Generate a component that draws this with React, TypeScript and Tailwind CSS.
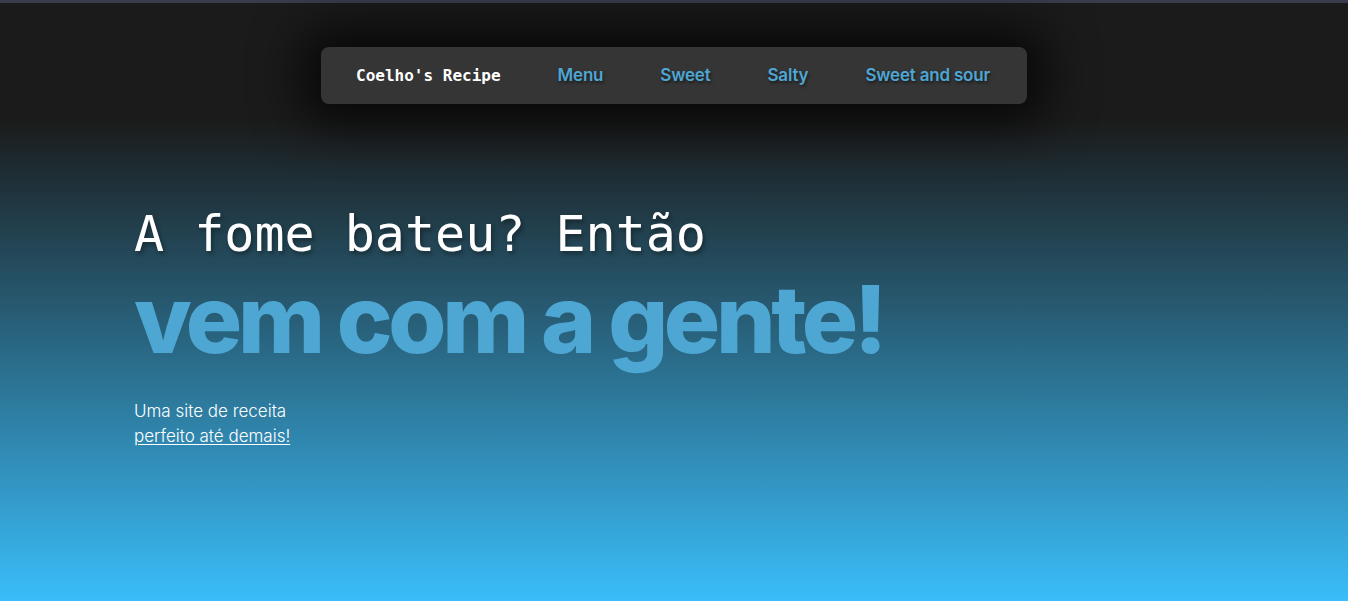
const links = ["Menu", "Sweet", "Salty", "Sweet and sour"];

export default function App() {
  return (
    <div className="w-full h-svh flex flex-col bg-linear-to-b/srgb from-[#1b1b1b] from-20% to-[#3abdf9] overflow-hidden">
      <div className="h-[3px] w-full bg-[#383c4c]" />

      <header className="flex justify-center pt-[44px]">
        <nav className="flex items-center h-[57px] pt-px pl-[35px] pr-[37px] gap-[57px] rounded-lg bg-[#353535] shadow-[0_0_50px_18px_rgba(0,0,0,0.75)]">
          <span className="font-['DejaVu_Sans_Mono',monospace] font-bold text-[16px] text-white">
            Coelho's Recipe
          </span>
          {links.map((item) => (
            <a
              key={item}
              href="#"
              className="font-['Inter',sans-serif] font-semibold text-[17px] tracking-[-0.2px] text-[#4ea6d3] [text-shadow:1px_2px_3px_rgba(0,0,0,0.5)]"
            >
              {item}
            </a>
          ))}
        </nav>
      </header>

      <main className="pl-[134px] pt-[100px]">
        <h1 className="font-['DejaVu_Sans_Mono',monospace] text-[50px] leading-[60px] text-white [text-shadow:2px_3px_4px_rgba(0,0,0,0.35)]">
          A fome bateu? Então
        </h1>
        <h2 className="mt-[5px] font-['Inter',sans-serif] font-extrabold text-[94px] leading-[100px] tracking-[-4.4px] text-[#4ea6d3]">
          vem com a gente!
        </h2>
        <p className="mt-[30px] font-['Inter',sans-serif] font-light text-[17px] leading-[25px] text-white">
          Uma site de receita
          <br />
          <a href="#" className="underline underline-offset-2">
            perfeito até demais!
          </a>
        </p>
      </main>
    </div>
  );
}
